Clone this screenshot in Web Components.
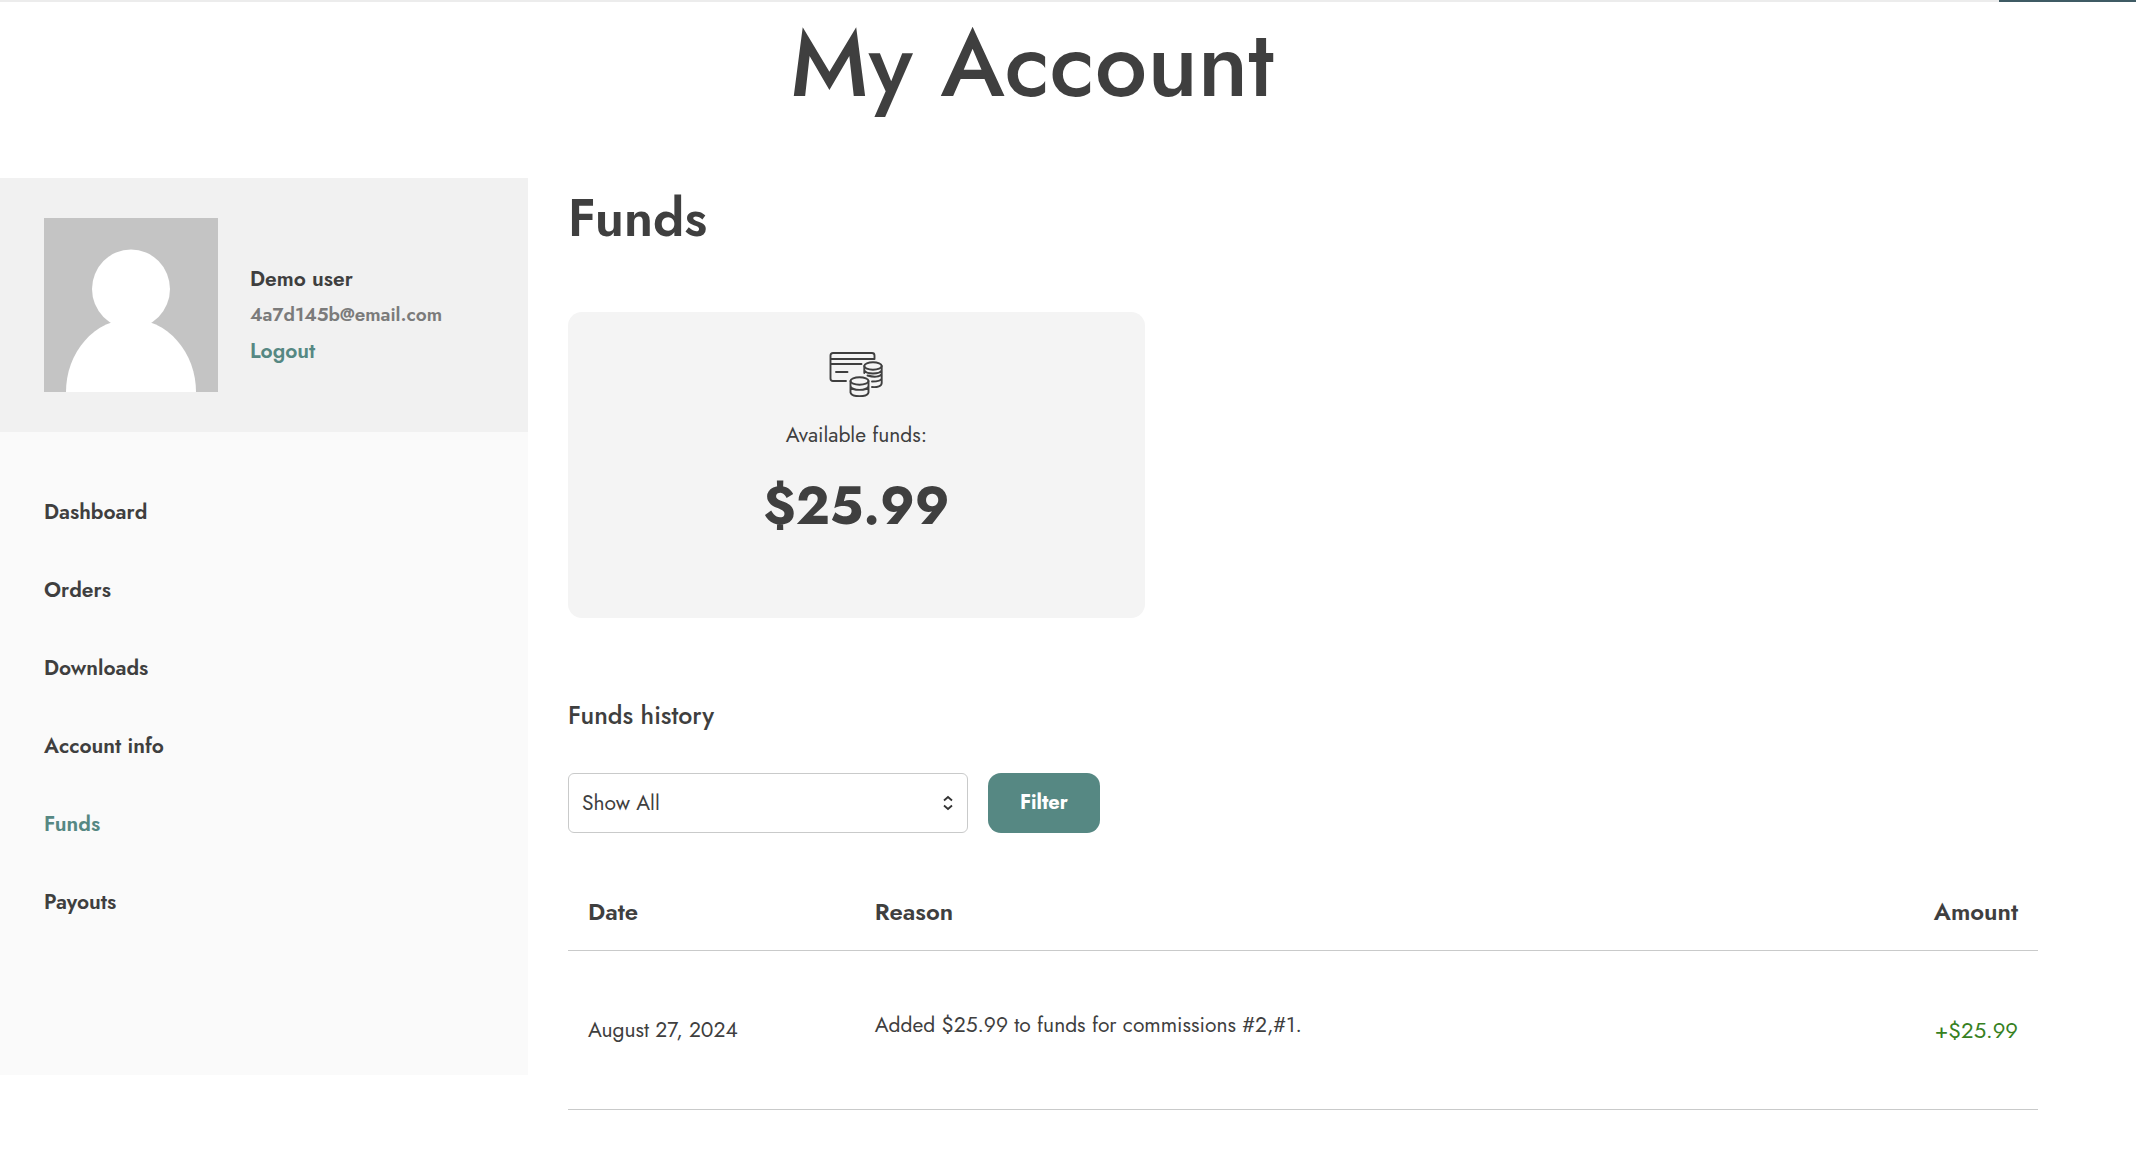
<!DOCTYPE html>
<html lang="en">
<head>
<meta charset="utf-8">
<meta name="viewport" content="width=device-width, initial-scale=1">
<title>My Account – Funds</title>
<style>
  :root {
    --ink: #3f3f3f;
    --accent: #568883;
    --line: #c9caca;
  }
  body {
    margin: 0;
    background: #fff;
    color: var(--ink);
    font-family: Jost, Lato, "Liberation Sans", sans-serif;
    font-size: 21px;
    line-height: 30px;
  }
</style>
</head>
<body>
<account-page>
  <account-sidebar slot="sidebar">
    <user-profile slot="profile" name="Demo user" email="4a7d145b@email.com"></user-profile>
    <nav-item href="#dashboard">Dashboard</nav-item>
    <nav-item href="#orders">Orders</nav-item>
    <nav-item href="#downloads">Downloads</nav-item>
    <nav-item href="#account-info">Account info</nav-item>
    <nav-item href="#funds" active>Funds</nav-item>
    <nav-item href="#payouts">Payouts</nav-item>
  </account-sidebar>
  <funds-panel>
    <balance-card slot="balance" label="Available funds:">$25.99</balance-card>
    <history-filter slot="filter"></history-filter>
    <funds-table slot="table"></funds-table>
  </funds-panel>
</account-page>

<script>
const define = (name, html, setup) => {
  const template = document.createElement('template');
  template.innerHTML = html;
  customElements.define(name, class extends HTMLElement {
    constructor() {
      super();
      this.attachShadow({ mode: 'open' }).append(template.content.cloneNode(true));
    }
    connectedCallback() {
      if (setup) setup(this, this.shadowRoot);
    }
  });
};

define('account-page', `
  <style>
    :host { display: block; }
    .bar { display: flex; justify-content: flex-end; height: 2px; background: #ececec; }
    .bar span { width: 137px; background: #3f5b64; }
    header { padding: 4px 72px 56px 0; text-align: center; }
    h1 { margin: 0; font-size: 93px; line-height: 116px; font-weight: 500; }
    .columns { display: grid; grid-template-columns: 528px minmax(0, 1fr); gap: 40px; align-items: start; padding-right: 98px; }
  </style>
  <div class="bar"><span></span></div>
  <header><h1>My Account</h1></header>
  <div class="columns">
    <slot name="sidebar"></slot>
    <main><slot></slot></main>
  </div>`);

define('account-sidebar', `
  <style>
    :host { display: block; background: #fafafa; }
    nav { display: flex; flex-direction: column; padding: 41px 44px 134px; }
  </style>
  <slot name="profile"></slot>
  <nav aria-label="Account"><slot></slot></nav>`);

define('user-profile', `
  <style>
    :host { display: flex; align-items: center; gap: 32px; padding: 40px 44px; background: #f1f1f1; font-weight: 600; line-height: 36px; }
    svg { display: block; flex: none; }
    .info { display: flex; flex-direction: column; align-items: flex-start; padding-top: 20px; }
    .email { font-size: 19px; color: #7b7b7b; }
    a { color: var(--accent); text-decoration: none; }
  </style>
  <svg width="174" height="174" viewBox="0 0 174 174" role="img" aria-label="Avatar">
    <rect width="174" height="174" fill="#c4c4c4"/>
    <ellipse cx="87" cy="71" rx="39" ry="39.500" fill="#fff"/>
    <ellipse cx="87" cy="174" rx="65" ry="73" fill="#fff"/>
  </svg>
  <div class="info">
    <span class="name"></span>
    <span class="email"></span>
    <a href="#logout">Logout</a>
  </div>`, (el, root) => {
    root.querySelector('.name').textContent = el.getAttribute('name');
    root.querySelector('.email').textContent = el.getAttribute('email');
  });

define('nav-item', `
  <style>
    :host { display: block; font-weight: 600; line-height: 78px; }
    a { display: block; color: var(--ink); text-decoration: none; }
    :host([active]) a { color: var(--accent); }
  </style>
  <a><slot></slot></a>`, (el, root) => {
    const link = root.querySelector('a');
    link.href = el.getAttribute('href');
    if (el.hasAttribute('active')) link.setAttribute('aria-current', 'page');
  });

define('funds-panel', `
  <style>
    :host { display: block; padding-top: 8px; }
    h2 { margin: 0 0 62px; font-size: 52px; line-height: 64px; font-weight: 600; }
    h3 { margin: 79px 0 40px; font-size: 25px; line-height: 36px; font-weight: 500; }
  </style>
  <h2>Funds</h2>
  <slot name="balance"></slot>
  <h3>Funds history</h3>
  <slot name="filter"></slot>
  <slot name="table"></slot>`);

define('balance-card', `
  <style>
    :host { display: flex; flex-direction: column; align-items: center; gap: 23px; width: 39.25%; min-width: 320px; box-sizing: border-box; padding: 40px 20px 79px; border-radius: 14px; background: #f4f4f4; }
    svg { display: block; }
    strong { font-size: 52px; line-height: 66px; font-weight: 700; }
  </style>
  <svg width="54" height="45" viewBox="0 0 54 45" fill="none" stroke="#3f3f3f" stroke-width="1.9" stroke-linecap="round" stroke-linejoin="round" aria-hidden="true">
    <path d="M17 29H4Q1.500 29 1.500 26.500V3.500Q1.500 1 4 1H43Q45.500 1 45.500 3.500V7M1.500 7H45.500M1.500 12H32.500M7 20H18.500"/>
    <ellipse cx="44" cy="14" rx="8.700" ry="3.700"/>
    <path d="M35.300 14V21M52.700 14V31C52.700 34 48.500 35.500 43 35M35.300 18.500C37.500 22.500 50.500 22.500 52.700 18.500M38.500 23.500C45 25.500 51 25 52.700 22M43 29.500C48.500 29.500 52 29 52.700 26.500"/>
    <ellipse cx="30.500" cy="29" rx="9" ry="3.700"/>
    <path d="M21.500 29V40.500C22.500 45.500 38.500 45.500 39.500 40.500V29M21.500 34.500C23.500 39 37.500 39 39.500 34.500"/>
  </svg>
  <span class="label"></span>
  <strong><slot></slot></strong>`, (el, root) => {
    root.querySelector('.label').textContent = el.getAttribute('label');
  });

define('history-filter', `
  <style>
    :host { display: block; }
    form { display: flex; gap: 20px; margin: 0; }
    label { display: grid; width: 400px; align-items: center; }
    select, svg { grid-area: 1 / 1; }
    select { appearance: none; width: 100%; height: 60px; margin: 0; padding: 0 40px 0 13px; border: 1px solid var(--line); border-radius: 6px; background: #fff; color: inherit; font: inherit; }
    svg { justify-self: end; margin-right: 15px; pointer-events: none; }
    button { height: 60px; margin: 0; padding: 0 32px; border: 0; border-radius: 13px; background: var(--accent); color: #fff; font: inherit; font-size: 20px; font-weight: 700; }
  </style>
  <form>
    <label>
      <select aria-label="Filter funds history"><option>Show All</option></select>
      <svg width="10" height="16" viewBox="0 0 10 16" fill="none" stroke="#333" stroke-width="1.800" aria-hidden="true"><path d="M1 5.500L5 2L9 5.500M1 10.500L5 14L9 10.500"/></svg>
    </label>
    <button type="button">Filter</button>
  </form>`);

define('funds-table', `
  <style>
    :host { display: block; margin-top: 41px; }
    table { width: 100%; border-collapse: separate; border-spacing: 0; table-layout: fixed; }
    th, td { padding: 20px; border-bottom: 1px solid var(--line); text-align: left; vertical-align: middle; }
    th { font-size: 24px; line-height: 36px; font-weight: 600; }
    td { padding: 59px 20px; }
    .date { width: 19.5%; box-sizing: border-box; }
    .amount { width: 14%; box-sizing: border-box; text-align: right; }
    td.amount { color: #37811f; font-size: 22px; }
    p { margin: 0 0 10px; }
  </style>
  <table>
    <thead>
      <tr><th class="date" scope="col">Date</th><th scope="col">Reason</th><th class="amount" scope="col">Amount</th></tr>
    </thead>
    <tbody>
      <tr><td>August 27, 2024</td><td><p>Added $25.99 to funds for commissions #2,#1.</p></td><td class="amount">+$25.99</td></tr>
    </tbody>
  </table>`);
</script>
</body>
</html>
